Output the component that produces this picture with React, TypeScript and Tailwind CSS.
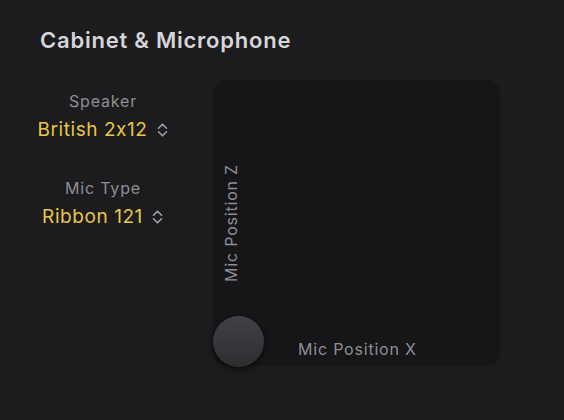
import React from "react";

const Chevrons = () => (
  <svg className="w-[13px] h-[16px]" viewBox="0 0 13 16" fill="none" stroke="#a1a1a6" strokeWidth={1.6} strokeLinecap="round" strokeLinejoin="round">
    <path d="M2.5 6.2l4-4 4 4" />
    <path d="M2.5 9.8l4 4 4-4" />
  </svg>
);

const Picker = ({ label, value }: { label: string; value: string }) => (
  <div className="flex flex-col items-center">
    <span className="text-[16px] leading-[20px] tracking-[0.05em] text-[#8e8e93]">{label}</span>
    <div className="flex items-center gap-[8px] mt-[7px]">
      <span className="text-[19px] leading-[24px] tracking-[0.03em] text-[#e9c746] [font-feature-settings:'calt'_0]">
        {value}
      </span>
      <Chevrons />
    </div>
  </div>
);

export default function App() {
  return (
    <div
      className="w-[564px] h-[420px] bg-[#1c1c1e] pt-[26px] overflow-hidden"
      style={{ fontFamily: "Inter, 'Noto Sans', sans-serif" }}
    >
      <h1 className="pl-[40px] text-[22px] leading-[28px] tracking-[0.035em] font-semibold text-[#d6d6d8]">
        Cabinet &amp; Microphone
      </h1>

      <div className="flex mt-[26px]">
        {/* Pickers */}
        <div className="w-[206px] flex flex-col gap-[36px] pt-[11px]">
          <Picker label="Speaker" value="British 2x12" />
          <Picker label="Mic Type" value="Ribbon 121" />
        </div>

        {/* XY pad */}
        <div className="relative ml-[7px] w-[287px] h-[286px] rounded-[13px] bg-[#161618]">
          <span className="absolute left-[18px] top-[143px] -translate-x-1/2 -translate-y-1/2 -rotate-90 whitespace-nowrap text-[16px] leading-[20px] tracking-[0.05em] text-[#8e8e93]">
            Mic Position Z
          </span>
          <span className="absolute left-[85px] bottom-[7px] whitespace-nowrap text-[16px] leading-[20px] tracking-[0.05em] text-[#8e8e93]">
            Mic Position X
          </span>
          <div className="absolute left-0 top-[236px] w-[51px] h-[51px] rounded-full bg-gradient-to-b from-[#424246] to-[#2e2e31] shadow-[0_2px_6px_rgba(0,0,0,0.6)]" />
        </div>
      </div>
    </div>
  );
}
